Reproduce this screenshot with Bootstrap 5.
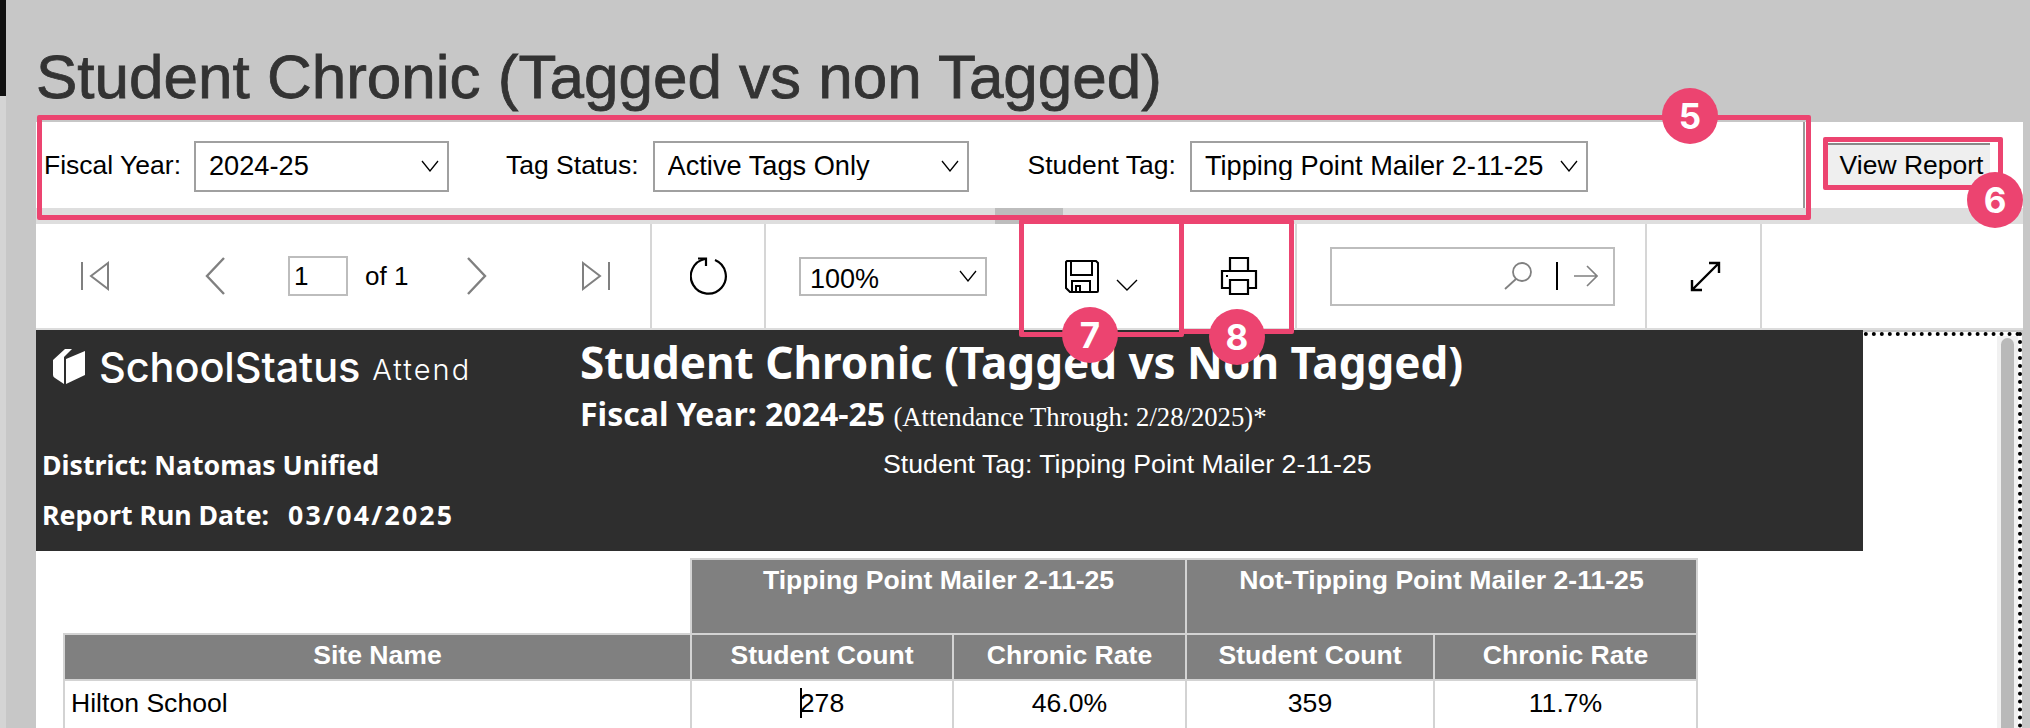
<!doctype html>
<html lang="en"><head><meta charset="utf-8"><title>Student Chronic</title>
<link href="https://cdn.jsdelivr.net/npm/bootstrap@5.3.0/dist/css/bootstrap.min.css" rel="stylesheet">
<style>
html,body{margin:0;height:728px;overflow:hidden}
body{background:#c7c7c7;font-family:"Liberation Sans",Arial,sans-serif;color:#000;width:2030px;position:relative}
.rail{width:6px;height:728px;flex:none;background:#d4d4d4}
.rail-top{height:96px;background:#111}
.main-col{width:1987px;margin-left:30px;flex:none}
.page-title{font-size:62px;line-height:72px;padding-top:41px;margin:0 0 9px;color:#333;font-weight:400;white-space:nowrap;font-family:"Liberation Sans",sans-serif;-webkit-text-stroke:.8px #333}
.param-bar{height:86px;background:#fff}
.param-group{width:1769px;border-right:2px solid #999;padding-left:8px;padding-top:2px}
.param-label{font-size:26.5px;white-space:nowrap}
.param-select{height:51px;border:2px solid #a0a0a0;border-radius:0;font-size:27.2px;line-height:1;padding:0 30px 0 13px;color:#000;box-shadow:none;background-position:right 8px center;background-size:18px 12px;background-image:url("data:image/svg+xml,%3Csvg xmlns='http://www.w3.org/2000/svg' viewBox='0 0 18 12'%3E%3Cpath d='M1 1l8 10 8-10' fill='none' stroke='%23000' stroke-width='1.3'/%3E%3C/svg%3E");font-family:"Liberation Sans",sans-serif}
.w-fy{width:255px;margin:0 57px 0 13px}
.w-ts{width:316px;margin:0 59px 0 14px}
.w-st{width:398px;margin-left:14px}
.run-btn{width:163px;height:44px;margin-left:22px;background:#efefef;border:0;border-top:2px solid #888;border-radius:0;font-size:26.5px;padding:0 0 0 6px;color:#000;white-space:nowrap}
.split-band{height:16px;background:#dedede}
.split-grip{width:68px;height:16px;margin-left:959px;background:#bdbdbd}
.tool-bar{height:106px;background:#fff;border-bottom:2px solid #dcdcdc}
.tool-cell{height:104px;border-right:2px solid #d6d6d6;flex:none}
.cell-nav{width:616px;padding-left:45px}
.cell-ref{width:114px;padding-left:38px}
.cell-zoom{width:253px;padding-left:33px;border-right:0}
.cell-exp{width:165px;padding-left:46px;border-right:0}
.cell-prn{width:113px;padding-left:36px}
.cell-find{width:350px;padding-left:33px}
.cell-full{width:115px;padding-left:43px}
.page-box{width:60px;height:40px;border:2px solid #bdbdbd;font-size:26px;padding:0 4px;margin:0 17px 0 63px;line-height:36px}
.of-text{font-size:26px;white-space:nowrap}
.ml-next{margin-left:59px}.ml-last{margin-left:94px}.ml-prev{margin-left:95px}
.chev-low{margin:18px 0 0 17px}
.zoom-select{width:188px;height:39px;border:2px solid #b9b9b9;font-size:27px;padding:0 24px 0 9px;border-radius:0;background-position:right 8px center;background-size:18px 12px;color:#000;box-shadow:none;background-image:url("data:image/svg+xml,%3Csvg xmlns='http://www.w3.org/2000/svg' viewBox='0 0 18 12'%3E%3Cpath d='M1 1l8 10 8-10' fill='none' stroke='%23000' stroke-width='1.3'/%3E%3C/svg%3E")}
.find-box{width:285px;height:59px;border:2px solid #bdbdbd;padding-right:15px}
.mag-gap{margin-right:8px}
.report-pane{height:396px;margin-top:2px;background:#fff;border-top:4px dotted #000;border-right:4px dotted #000;width:1986px;position:relative}
.dark-head{width:1827px;height:221px;margin-top:-6px;background:#2e2e2e;color:#fff;position:relative}
.logo-row{padding:18px 0 0 11px;height:117px}
.logo-word{font-family:Inter,sans-serif;font-size:41.5px;line-height:46px;letter-spacing:-.1px;margin-left:13px;font-weight:500;margin-top:-4px}
.logo-sub{font-family:Inter,sans-serif;font-size:29px;font-weight:300;margin-left:12px;line-height:46px;letter-spacing:2px;margin-top:-1px}
.head-left{width:544px;flex:none;padding-left:6px}
.head-main{flex:1}
.bold-line{font-family:"Noto Sans",sans-serif;font-weight:700;font-size:26.7px;white-space:nowrap;line-height:36px}
.bold-line+.bold-line{margin-top:14px}
.date-val{letter-spacing:2.2px;margin-left:5px}
.report-title{font-family:"Noto Sans",sans-serif;font-weight:700;font-size:44px;line-height:54px;white-space:nowrap;padding-top:5px}
.fy-line{font-family:"Noto Sans",sans-serif;font-weight:700;font-size:32px;line-height:36px;white-space:nowrap;margin-top:7px}
.fy-sub{font-family:"Liberation Serif",serif;font-weight:400;font-size:26.7px}
.tag-line{font-size:26.7px;line-height:32px;margin:13px 0 0 303px;white-space:nowrap}
.grid-wrap{padding:7px 0 0 27px}
.sheet{border-collapse:collapse;table-layout:fixed;width:1633px;font-size:26.6px}
.sheet th,.sheet td{border:2px solid #d3d3d3;padding:0}
.sheet .blank-cell{border:0}
.sheet th{background:#808080;color:#fff;text-align:center;vertical-align:top;font-weight:700;line-height:30px}
.hd1 th{height:75px;padding-top:5px}
.hd2 th{height:46px;padding-top:5px}
.sheet td{text-align:center;height:50px;vertical-align:top;padding-top:5px;line-height:34px}
.sheet td.site-name{text-align:left;padding-left:6px}
.caret-mark{border-left:2px solid #000;margin-right:-2px}
.bar-track{position:absolute;left:1961px;top:0;width:21px;height:396px;background:#f1f1f1}
.bar-thumb{width:13px;height:393px;margin:2px 0 0 4px;background:#b9b9b9;border-radius:7px 7px 0 0}
.pink-box{position:absolute;border:5px solid #ec4470;border-radius:2px}
.pink-dot{position:absolute;width:56px;height:56px;border-radius:50%;background:#ec4470;color:#fff;font-weight:700;font-size:35px;line-height:56px;text-align:center;font-family:Inter,sans-serif}
.box5{left:37px;top:115px;width:1774px;height:105px}
.box6{left:1823px;top:137px;width:180px;height:53px}
.box7{left:1019px;top:219px;width:165px;height:118px}
.box8{left:1179px;top:219px;width:115px;height:115px}
.dot5{left:1662px;top:88px}.dot6{left:1967px;top:172px}.dot7{left:1062px;top:307px}.dot8{left:1209px;top:309px}
</style></head><body>
<div class="d-flex">
<div class="rail"><div class="rail-top"></div></div>
<div class="main-col">
<h1 class="page-title">Student Chronic (Tagged vs non Tagged)</h1>
<div class="param-bar d-flex align-items-center">
<div class="param-group d-flex align-items-center h-100">
<span class="param-label">Fiscal Year:</span><select class="form-select param-select w-fy"><option>2024-25</option></select>
<span class="param-label">Tag Status:</span><select class="form-select param-select w-ts"><option>Active Tags Only</option></select>
<span class="param-label">Student Tag:</span><select class="form-select param-select w-st"><option>Tipping Point Mailer 2-11-25</option></select>
</div>
<button class="btn run-btn">View Report</button>
</div>
<div class="split-band"><div class="split-grip"></div></div>
<div class="tool-bar d-flex">
<div class="tool-cell cell-nav d-flex align-items-center">
<svg width="29" height="30" viewBox="0 0 29 30" fill="none" stroke="#808080" stroke-width="2"><path d="M1 1v28M27 2L10 15l17 13z"/></svg>
<svg class="ml-prev" width="20" height="38" viewBox="0 0 20 38" fill="none" stroke="#808080" stroke-width="2.4"><path d="M19 1L2 19l17 18"/></svg>
<div class="page-box">1</div><span class="of-text">of 1</span>
<svg class="ml-next" width="20" height="38" viewBox="0 0 20 38" fill="none" stroke="#808080" stroke-width="2.4"><path d="M1 1l17 18L1 37"/></svg>
<svg class="ml-last" width="29" height="30" viewBox="0 0 29 30" fill="none" stroke="#808080" stroke-width="2"><path d="M28 1v28M2 2l17 13L2 28z"/></svg>
</div>
<div class="tool-cell cell-ref d-flex align-items-center">
<svg width="40" height="40" viewBox="0 0 40 40" fill="none" stroke="#000" stroke-width="2.2"><path d="M25 4a17.5 17.5 0 1 1-10-1"/><path d="M8 2.5h8V10"/></svg>
</div>
<div class="tool-cell cell-zoom d-flex align-items-center"><select class="form-select zoom-select"><option>100%</option></select></div>
<div class="tool-cell cell-exp d-flex align-items-center">
<svg width="34" height="33" viewBox="0 0 34 33" fill="none" stroke="#000" stroke-width="2"><path d="M2 1h29l2 2v28a1 1 0 0 1-1 1H5l-4-4V2z"/><path d="M6 1v14h21V1M7 32V21h18v11M11 32v-6h4v6"/></svg>
<svg class="chev-low" width="22" height="12" viewBox="0 0 22 12" fill="none" stroke="#000" stroke-width="1.4"><path d="M1 1l10 10L21 1"/></svg>
</div>
<div class="tool-cell cell-prn d-flex align-items-center">
<svg width="38" height="38" viewBox="0 0 38 38" fill="none" stroke="#000" stroke-width="2.2"><path d="M10 14V1h18v13M10 31H2V14h34v17h-8"/><path d="M10 23h18v14H10z"/><path d="M6 19h2"/></svg>
</div>
<div class="tool-cell cell-find d-flex align-items-center">
<div class="find-box d-flex align-items-center justify-content-end gap-3">
<svg class="mag-gap" width="28" height="28" viewBox="0 0 28 28" fill="none" stroke="#808080" stroke-width="1.8"><circle cx="18" cy="10" r="9"/><path d="M12 17L1 27"/></svg>
<svg width="2" height="28" viewBox="0 0 2 28"><rect width="2" height="28" fill="#000"/></svg>
<svg width="24" height="22" viewBox="0 0 24 22" fill="none" stroke="#808080" stroke-width="1.6"><path d="M0 11h23M13 1l10 10-10 10"/></svg>
</div></div>
<div class="tool-cell cell-full d-flex align-items-center">
<svg width="31" height="31" viewBox="0 0 31 31" fill="none" stroke="#000" stroke-width="2.4"><path d="M2 29L29 2M19 2h10v10M2 19v10h10"/></svg>
</div>
</div>
<div class="report-pane">
<div class="dark-head d-flex flex-column">
<div class="d-flex flex-grow-1">
<div class="head-left d-flex flex-column">
<div class="logo-row d-flex align-items-start">
<svg width="33" height="37" viewBox="0 0 33 37" fill="#fff"><path d="M13 11L32 3v24L13 36z"/><path d="M0 12L12 1h7L11 9v27l-9-6q-2-1-2-3z"/></svg>
<span class="logo-word">SchoolStatus</span><span class="logo-sub">Attend</span>
</div>
<div class="bold-line">District: Natomas Unified</div>
<div class="bold-line">Report Run Date:&nbsp; <span class="date-val">03/04/2025</span></div>
</div>
<div class="head-main">
<div class="report-title">Student Chronic (Tagged vs Non Tagged)</div>
<div class="fy-line">Fiscal Year: 2024-25 <span class="fy-sub">(Attendance Through: 2/28/2025)*</span></div>
<div class="tag-line">Student Tag: Tipping Point Mailer 2-11-25</div>
</div>
</div>
</div>
<div class="grid-wrap">
<table class="sheet">
<colgroup><col style="width:627px"><col style="width:262px"><col style="width:233px"><col style="width:248px"><col style="width:263px"></colgroup>
<tr class="hd1"><td class="blank-cell"></td><th colspan="2">Tipping Point Mailer 2-11-25</th><th colspan="2">Not-Tipping Point Mailer 2-11-25</th></tr>
<tr class="hd2"><th>Site Name</th><th>Student Count</th><th>Chronic Rate</th><th>Student Count</th><th>Chronic Rate</th></tr>
<tr><td class="site-name">Hilton School</td><td><span class="caret-mark"></span>278</td><td>46.0%</td><td>359</td><td>11.7%</td></tr>
</table>
</div>
<div class="bar-track"><div class="bar-thumb"></div></div>
</div>
</div>
</div>
<div class="pink-box box5"></div><div class="pink-box box6"></div><div class="pink-box box7"></div><div class="pink-box box8"></div>
<div class="pink-dot dot5">5</div><div class="pink-dot dot6">6</div><div class="pink-dot dot7">7</div><div class="pink-dot dot8">8</div>
<script src="https://cdn.jsdelivr.net/npm/bootstrap@5.3.0/dist/js/bootstrap.bundle.min.js"></script>
</body></html>
